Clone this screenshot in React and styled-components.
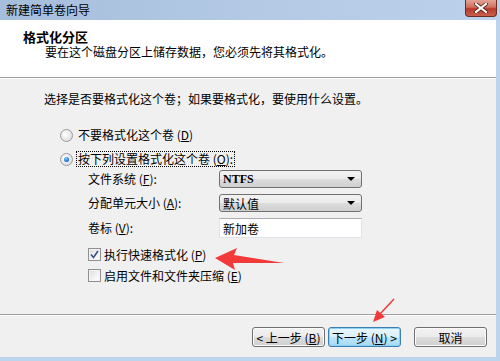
import styled, { createGlobalStyle } from "styled-components";

const GlobalStyle = createGlobalStyle`
  html, body { margin: 0; padding: 0; background: #f0f0f0; }
  body {
    font-family: "Noto Sans CJK SC", "Liberation Sans", sans-serif;
    font-size: 12px;
    color: #000;
  }
`;

const Window = styled.div`
  position: relative;
  width: 500px;
  height: 361px;
  display: flex;
  flex-direction: column;
  overflow: hidden;
  background: #f0f0f0;
`;

const TitleBar = styled.div`
  height: 20px;
  display: flex;
  align-items: flex-start;
  justify-content: space-between;
  background: linear-gradient(90deg, #a5bedc 0%, #b3c9e4 50%, #bcd2ec 100%);
  padding-left: 6px;
  padding-right: 3px;
`;

const TitleText = styled.span`
  line-height: 20px;
  font-size: 12px;
  color: #000;
`;

const CloseButton = styled.div`
  width: 30px;
  height: 16px;
  border: 1px solid #6b2b24;
  border-top: none;
  border-radius: 0 0 4px 4px;
  background: linear-gradient(180deg, #e3a496 0%, #d0705e 45%, #b8392a 55%, #c9604c 100%);
  display: flex;
  align-items: center;
  justify-content: center;
`;

const Frame = styled.div`
  flex: 1;
  display: flex;
  flex-direction: column;
  border-right: 4px solid #bcd4ec;
  border-bottom: 4px solid #bcd4ec;
`;

const Header = styled.div`
  height: 58px;
  box-sizing: border-box;
  background: #fff;
  border-bottom: 1px solid #a0a0a0;
  padding: 9px 0 0 23px;
`;

const HeaderTitle = styled.div`
  font-weight: bold;
  font-size: 13px;
  line-height: 16px;
`;

const HeaderDesc = styled.div`
  margin-left: 22px;
  line-height: 14px;
`;

const Body = styled.div`
  flex: 1;
  padding: 13px 0 0 44px;
  border-top: 1px solid #fff;
`;

const Prompt = styled.div`
  line-height: 14px;
`;

const OptionList = styled.div`
  margin: 20px 0 0 16px;
  display: flex;
  flex-direction: column;
  gap: 6px;
`;

const OptionRow = styled.div`
  display: flex;
  align-items: center;
  gap: 3px;
  height: 18px;
`;

const Radio = styled.span`
  width: 11px;
  height: 11px;
  border-radius: 50%;
  border: 1px solid #9a9a9a;
  background: radial-gradient(circle at 40% 40%, #ffffff 0%, #e6e6e6 60%, #cfcfcf 100%);
  display: flex;
  align-items: center;
  justify-content: center;
  &::after {
    content: "";
    width: 5px;
    height: 5px;
    border-radius: 50%;
    background: radial-gradient(circle at 40% 35%, #8fd2ff 0%, #1f7fd6 55%, #0b3f8c 100%);
    display: ${(p) => (p.checked ? "block" : "none")};
  }
`;

const OptionLabel = styled.span`
  line-height: 14px;
  padding: 0 1px;
  border: 1px dotted ${(p) => (p.focused ? "#000" : "transparent")};
`;

const Settings = styled.div`
  margin: -4px 0 0 28px;
  display: grid;
  grid-template-columns: 131px 143px;
  row-gap: 6px;
  align-items: center;
`;

const FieldLabel = styled.span`
  line-height: 14px;
`;

const Select = styled.div`
  height: 18px;
  box-sizing: border-box;
  border: 1px solid #707070;
  border-radius: 3px;
  background: linear-gradient(180deg, #f2f2f2 0%, #ebebeb 50%, #dddddd 51%, #cfcfcf 100%);
  display: flex;
  align-items: center;
  justify-content: space-between;
  padding: 0 6px 0 3px;
  font-family: ${(p) => (p.mono ? '"Liberation Serif", serif' : "inherit")};
  font-weight: ${(p) => (p.mono ? "bold" : "normal")};
  font-size: 12px;
`;

const Arrow = styled.span`
  width: 0;
  height: 0;
  border-left: 4px solid transparent;
  border-right: 4px solid transparent;
  border-top: 4px solid #000;
`;

const TextInput = styled.div`
  height: 20px;
  box-sizing: border-box;
  border: 1px solid #e2e3ea;
  border-top-color: #abadb3;
  background: #fff;
  padding: 0 3px;
  display: flex;
  align-items: center;
`;

const CheckList = styled.div`
  margin: 8px 0 0 44px;
  display: flex;
  flex-direction: column;
  gap: 4px;
`;

const CheckRow = styled.div`
  display: flex;
  align-items: center;
  gap: 3px;
  height: 17px;
`;

const Checkbox = styled.span`
  width: 11px;
  height: 11px;
  border: 1px solid #8f8f8f;
  background: linear-gradient(135deg, #dcdcdc 0%, #f4f4f4 60%, #ffffff 100%);
  box-shadow: inset 0 0 0 1px #f4f4f4;
  display: flex;
  align-items: center;
  justify-content: center;
`;

const Divider = styled.div`
  height: 0;
  border-top: 1px solid #a0a0a0;
  border-bottom: 1px solid #fff;
`;

const ButtonBar = styled.div`
  display: flex;
  justify-content: flex-end;
  padding: 11px 9px 10px 0;
`;

const Button = styled.div`
  width: 73px;
  height: 20px;
  box-sizing: border-box;
  border: 1px solid ${(p) => (p.primary ? "#3c7fb1" : "#707070")};
  border-radius: 3px;
  background: ${(p) =>
    p.primary
      ? "linear-gradient(180deg, #eaf6fd 0%, #d9f0fc 50%, #bee6fd 51%, #a7d9f5 100%)"
      : "linear-gradient(180deg, #f2f2f2 0%, #ebebeb 50%, #dddddd 51%, #cfcfcf 100%)"};
  box-shadow: ${(p) => (p.primary ? "inset 0 0 0 1px #8cd1f5" : "inset 0 0 0 1px #fcfcfc")};
  display: flex;
  align-items: center;
  justify-content: center;
  margin-left: ${(p) => p.gap || 0}px;
  white-space: nowrap;
  font-size: 12px;
`;

const Annotation = styled.svg`
  position: absolute;
  pointer-events: none;
`;

export default function App() {
  return (
    <>
      <GlobalStyle />
      <Window>
        <TitleBar>
          <TitleText>新建简单卷向导</TitleText>
          <CloseButton>
            <svg width="14" height="10" viewBox="0 0 14 10">
              <path d="M2 1 L12 9 M12 1 L2 9" stroke="#4a1c16" strokeWidth="3.6" strokeLinecap="square" />
              <path d="M2 1 L12 9 M12 1 L2 9" stroke="#fff" strokeWidth="2.2" strokeLinecap="square" />
            </svg>
          </CloseButton>
        </TitleBar>
        <Frame>
          <Header>
            <HeaderTitle>格式化分区</HeaderTitle>
            <HeaderDesc>要在这个磁盘分区上储存数据，您必须先将其格式化。</HeaderDesc>
          </Header>
          <Body>
            <Prompt>选择是否要格式化这个卷；如果要格式化，要使用什么设置。</Prompt>
            <OptionList>
              <OptionRow>
                <Radio />
                <OptionLabel>
                  不要格式化这个卷 (<u>D</u>)
                </OptionLabel>
              </OptionRow>
              <OptionRow>
                <Radio checked />
                <OptionLabel focused>
                  按下列设置格式化这个卷 (<u>O</u>):
                </OptionLabel>
              </OptionRow>
              <Settings>
                <FieldLabel>
                  文件系统 (<u>F</u>):
                </FieldLabel>
                <Select mono>
                  NTFS
                  <Arrow />
                </Select>
                <FieldLabel>
                  分配单元大小 (<u>A</u>):
                </FieldLabel>
                <Select>
                  默认值
                  <Arrow />
                </Select>
                <FieldLabel>
                  卷标 (<u>V</u>):
                </FieldLabel>
                <TextInput>新加卷</TextInput>
              </Settings>
            </OptionList>
            <CheckList>
              <CheckRow>
                <Checkbox>
                  <svg width="9" height="9" viewBox="0 0 9 9">
                    <path d="M1 4.5 L3.5 7.5 L8 1" fill="none" stroke="#3b4f8a" strokeWidth="1.6" />
                  </svg>
                </Checkbox>
                <span>
                  执行快速格式化 (<u>P</u>)
                </span>
              </CheckRow>
              <CheckRow>
                <Checkbox />
                <span>
                  启用文件和文件夹压缩 (<u>E</u>)
                </span>
              </CheckRow>
            </CheckList>
          </Body>
          <Divider />
          <ButtonBar>
            <Button>&lt; 上一步 (<u>B</u>)</Button>
            <Button primary gap={3}>
              下一步 (<u>N</u>) &gt;
            </Button>
            <Button gap={13}>取消</Button>
          </ButtonBar>
        </Frame>
        <Annotation width="80" height="30" viewBox="0 0 80 30" style={{ left: 212, top: 246 }}>
          <path d="M3 12 L25 2 L22 9 L72 17 L21 17 L23 24 Z" fill="#f23a3a" />
        </Annotation>
        <Annotation width="30" height="30" viewBox="0 0 30 30" style={{ left: 369, top: 297 }}>
          <path d="M25 2 L11 17" stroke="#f23a3a" strokeWidth="1.5" />
          <path d="M4 25 L8 13 L16 20 Z" fill="#f23a3a" />
        </Annotation>
      </Window>
    </>
  );
}
